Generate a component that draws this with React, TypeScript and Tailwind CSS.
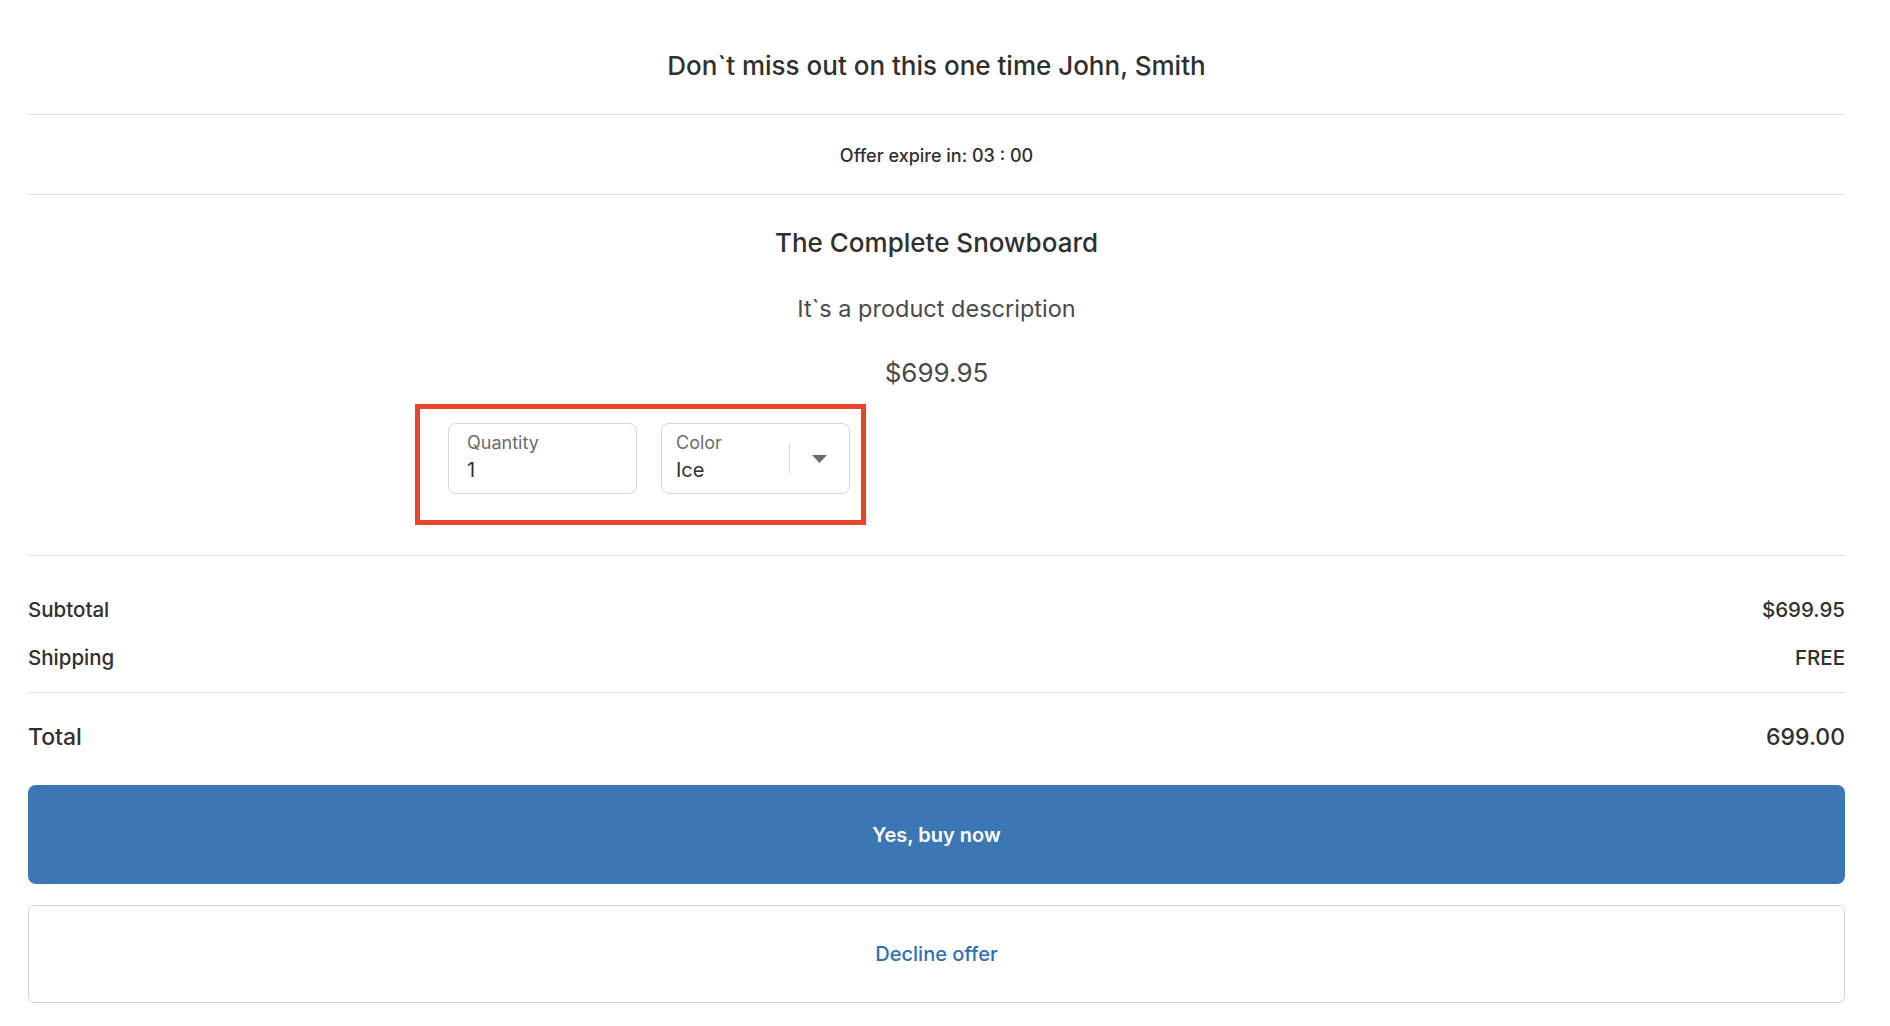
import React from 'react';

const font = { fontFamily: 'Inter, "Liberation Sans", sans-serif' };

const SummaryRow: React.FC<{ label: string; value: string; className?: string }> = ({ label, value, className }) => (
  <div className={`flex items-center justify-between ${className ?? ''}`}>
    <span>{label}</span>
    <span>{value}</span>
  </div>
);

export default function App() {
  return (
    <div className="min-h-screen bg-white pl-[28px] pr-[45px] text-[#303030]" style={font}>
      {/* Heading */}
      <div className="border-b border-[#e1e1e1] pt-[50px] pb-[32px] text-center text-[26px] leading-[32px] font-medium">
        Don`t miss out on this one time John, Smith
      </div>

      {/* Timer */}
      <div className="border-b border-[#e1e1e1] pt-[29px] pb-[26px] text-center text-[18px] leading-[24px] font-medium">
        Offer expire in: 03 : 00
      </div>

      {/* Product */}
      <div className="border-b border-[#e1e1e1] pb-[30px]">
        <div className="pt-[31px] text-center text-[26px] leading-[34px] font-medium">The Complete Snowboard</div>
        <div className="mt-[34px] text-center text-[23.5px] leading-[30px] text-[#4a4a4a]">It`s a product description</div>
        <div className="mt-[34px] text-center text-[26px] leading-[30px] text-[#4a4a4a]">$699.95</div>

        <div className="mt-[16px] ml-[387px] flex w-[451px] gap-[24px] border-[5px] border-[#e8432c] pt-[14px] pr-[11px] pb-[26px] pl-[28px]">
          <div className="flex h-[71px] w-[189px] flex-col rounded-lg border border-[#d6d6d6] pt-[8px] pl-[18px]">
            <span className="text-[18px] leading-[22px] text-[#6b6b6b]">Quantity</span>
            <span className="mt-[4px] text-[20px] leading-[24px] text-[#303030]">1</span>
          </div>
          <div className="flex h-[71px] w-[189px] items-center rounded-lg border border-[#d6d6d6]">
            <div className="flex flex-1 flex-col self-stretch pt-[8px] pl-[14px]">
              <span className="text-[18px] leading-[22px] text-[#6b6b6b]">Color</span>
              <span className="mt-[4px] text-[20px] leading-[24px] text-[#303030]">Ice</span>
            </div>
            <div className="flex h-[30px] w-[60px] items-center justify-center border-l border-[#dcdcdc]">
              <svg width="15" height="8" viewBox="0 0 15 8">
                <path d="M0 0 H15 L7.5 8 Z" fill="#6b6b6b" />
              </svg>
            </div>
          </div>
        </div>
      </div>

      {/* Summary */}
      <div className="border-b border-[#e1e1e1] pt-[40px] pb-[20px] text-[20.5px] leading-[28px] font-medium">
        <SummaryRow label="Subtotal" value="$699.95" />
        <SummaryRow label="Shipping" value="FREE" className="mt-[20px]" />
      </div>

      <SummaryRow label="Total" value="699.00" className="pt-[29px] text-[23px] leading-[30px] font-medium" />

      <button className="mt-[33px] flex h-[99px] w-full items-center justify-center rounded-lg bg-[#3a77b4] text-[20px] font-semibold text-white">
        Yes, buy now
      </button>
      <button className="mt-[21px] flex h-[98px] w-full items-center justify-center rounded-md border border-[#d4d4d4] bg-white text-[20px] font-medium text-[#2f6fb5]">
        Decline offer
      </button>
    </div>
  );
}
